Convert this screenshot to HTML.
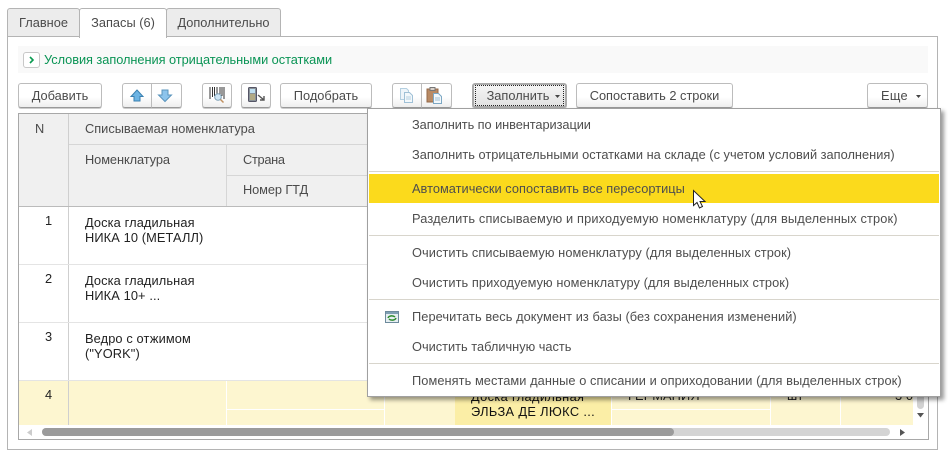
<!DOCTYPE html>
<html><head><meta charset="utf-8"><style>
html,body{margin:0;padding:0;background:#fff}
#p{position:relative;width:948px;height:458px;overflow:hidden;background:#fff;font:12.8px "Liberation Sans",Arial,sans-serif;color:#4b4b4b}
#p div,#p span.a{position:absolute;box-sizing:border-box}
.t{white-space:nowrap;line-height:14px}
.tab{top:8px;height:29px;border:1px solid #b4b4b4;border-bottom:1px solid #b4b4b4;border-radius:3px 3px 0 0;background:#ececec;text-align:center;line-height:27px;color:#4b4b4b}
.btn{top:83px;height:25px;border:1px solid #bcbcbc;border-bottom:1px solid #999;border-radius:3px;background:linear-gradient(#fff 0,#fff 55%,#eee 100%);text-align:center;line-height:24px;white-space:nowrap;box-shadow:0 1px 0 #ccc}
.h{background:#f0f0f0}
.l{background:#d6d6d6}
.m{left:412px;white-space:nowrap;line-height:14px;color:#4e4e4e}
.s{left:369px;width:570px;height:1px;background:#d8d5cc}
.c{color:#222;letter-spacing:.12px}
</style></head><body><div id="p">

<div style="left:7px;top:36px;width:931px;height:414px;border:1px solid #b4b4b4"></div>
<div class="tab" style="left:7px;width:73px;height:29px">Главное</div>
<div class="tab" style="left:79px;width:88px;height:30px;background:#fff;border-bottom:0;z-index:2">Запасы (6)</div>
<div class="tab" style="left:166px;width:115px">Дополнительно</div>

<div style="left:18px;top:46px;width:910px;height:27px;background:#f9f9f9"></div>
<div style="left:23px;top:52px;width:17px;height:16px;border:1px solid #c8c8c8;border-radius:3px;background:#fff"></div>
<svg style="position:absolute;left:28px;top:56px" width="7" height="8"><path d="M2 1l3 3-3 3" fill="none" stroke="#0a9a50" stroke-width="1.6"/></svg>
<div class="t" style="left:44px;top:53px;color:#0a9455;letter-spacing:-.05px">Условия заполнения отрицательными остатками</div>

<div class="btn" style="left:18px;width:84px">Добавить</div>
<div class="btn" style="left:122px;width:30px;border-radius:3px 0 0 3px"></div>
<div class="btn" style="left:151px;width:31px;border-radius:0 3px 3px 0"></div>
<svg style="position:absolute;left:129px;top:88px" width="46" height="16">
<path d="M8 2L14 8.500H11V13H5V8.500H2Z" fill="#6cb4e4" stroke="#3a80b0"/>
<path d="M33 2H39V7H42.500L36 13.500 29.500 7H33Z" fill="#8cc4ec" stroke="#5a94bc"/></svg>
<div class="btn" style="left:202px;width:30px"></div>
<svg style="position:absolute;left:209px;top:86px" width="18" height="18">
<path d="M1 1v12M3.500 1v10M5.500 1v9M8 1v7M11 1v7M13 1v9M15 1v12" stroke="#333" fill="none"/>
<circle cx="9" cy="11" r="3.300" fill="#cfe6f5" stroke="#7d9fb5"/><path d="M11.500 13.500l3 3" stroke="#c09060" stroke-width="1.500"/></svg>
<div class="btn" style="left:241px;width:30px"></div>
<svg style="position:absolute;left:248px;top:87px" width="18" height="18">
<rect x="0.500" y="0.500" width="8" height="14" rx="1" fill="#8a9298" stroke="#556"/><rect x="2" y="2" width="5" height="4" fill="#bfe0f2"/>
<path d="M2 8h5M2 10h5M2 12h5" stroke="#d8c070"/><path d="M10 8l6 5M16 9v4h-4" fill="none" stroke="#555" stroke-width="1.400"/></svg>
<div class="btn" style="left:280px;width:92px">Подобрать</div>
<div class="btn" style="left:392px;width:30px;border-radius:3px 0 0 3px"></div>
<div class="btn" style="left:421px;width:31px;border-radius:0 3px 3px 0"></div>
<svg style="position:absolute;left:399px;top:87px" width="48" height="18">
<path d="M1.500 1.500h6l2 2v9h-8z" fill="#eef5fa" stroke="#b4cfe0"/><path d="M5.500 5.500h5l3 3v7h-8z" fill="#f3f8fb" stroke="#9fc0d6"/><path d="M7 10h5M7 12h5" stroke="#b4cfe0"/>
<rect x="28" y="2" width="11" height="13" fill="#b98a64" stroke="#94694a"/><rect x="31" y="0.500" width="5" height="3" fill="#d8d0c8" stroke="#777"/>
<path d="M34.500 6.500h5l3 3v7h-8z" fill="#f3f8fb" stroke="#7da8c4"/><path d="M36 11h5M36 13h5" stroke="#9fc0d6"/></svg>
<div class="btn" style="left:472px;width:95px;border:2px solid #aaa;line-height:22px;background:linear-gradient(#f5f5f5,#e2e2e2);padding-right:3px">Заполнить</div>
<div style="left:475px;top:85px;width:89px;height:21px;border:1px dotted #222"></div>
<svg style="position:absolute;left:555px;top:95px" width="5" height="3"><path d="M0 0h5L2.500 3z" fill="#444"/></svg>
<div class="btn" style="left:576px;width:157px">Сопоставить 2 строки</div>
<div class="btn" style="left:867px;width:61px;padding-right:6px;letter-spacing:.3px">Еще</div>
<svg style="position:absolute;left:916px;top:95px" width="5" height="3"><path d="M0 0h5L2.500 3z" fill="#444"/></svg>

<!-- table -->
<div style="left:18px;top:113px;width:911px;height:327px;border:1px solid #a8a8a8;background:#fff"></div>
<div class="h" style="left:19px;top:114px;width:350px;height:92px"></div>
<div class="l" style="left:68px;top:114px;width:1px;height:311px;background:#cfcfcf"></div>
<div class="l" style="left:69px;top:144px;width:300px;height:1px"></div>
<div class="l" style="left:226px;top:145px;width:1px;height:61px"></div>
<div class="l" style="left:227px;top:175px;width:142px;height:1px"></div>
<div style="left:19px;top:206px;width:350px;height:1px;background:#bbb"></div>
<div class="t" style="left:35px;top:122px">N</div>
<div class="t" style="left:85px;top:122px">Списываемая номенклатура</div>
<div class="t" style="left:85px;top:153px;letter-spacing:-.08px">Номенклатура</div>
<div class="t" style="left:243px;top:153px;letter-spacing:-.3px">Страна</div>
<div class="t" style="left:243px;top:183px;letter-spacing:-.1px">Номер ГТД</div>

<div class="t c" style="left:45px;top:214px">1</div>
<div class="t c" style="left:85px;top:215px;line-height:15px">Доска гладильная<br>НИКА 10 (МЕТАЛЛ)</div>
<div style="left:19px;top:264px;width:350px;height:1px;background:#e4e4e4"></div>
<div class="t c" style="left:45px;top:272px">2</div>
<div class="t c" style="left:85px;top:273px;line-height:15px">Доска гладильная<br>НИКА 10+ ...</div>
<div style="left:19px;top:322px;width:350px;height:1px;background:#e4e4e4"></div>
<div class="t c" style="left:45px;top:330px">3</div>
<div class="t c" style="left:85px;top:331px;line-height:15px">Ведро с отжимом<br>("YORK")</div>
<div style="left:19px;top:380px;width:350px;height:1px;background:#e4e4e4"></div>

<div style="left:19px;top:381px;width:894px;height:44px;background:#fdf6d0"></div>
<div style="left:68px;top:381px;width:1px;height:44px;background:#cfcfcf"></div>
<div style="left:226px;top:381px;width:1px;height:44px;background:#fff"></div>
<div style="left:227px;top:409px;width:158px;height:1px;background:#fff"></div>
<div style="left:384px;top:381px;width:1px;height:44px;background:#fff"></div>
<div style="left:455px;top:381px;width:156px;height:44px;background:#fbeea6"></div>
<div style="left:611px;top:381px;width:1px;height:44px;background:#fff"></div>
<div style="left:612px;top:409px;width:158px;height:1px;background:#fff"></div>
<div style="left:770px;top:381px;width:1px;height:44px;background:#fff"></div>
<div style="left:840px;top:381px;width:1px;height:44px;background:#fff"></div>
<div class="t c" style="left:45px;top:388px">4</div>
<div class="t" style="left:471px;top:389px;line-height:15px;color:#111;letter-spacing:.35px">Доска гладильная<br>ЭЛЬЗА ДЕ ЛЮКС ...</div>
<div class="t c" style="left:628px;top:389px">ГЕРМАНИЯ</div>
<div class="t c" style="left:787px;top:389px">шт</div>
<div class="t c" style="left:895px;top:389px">3 0</div>

<!-- scrollbars -->
<div style="left:917px;top:381px;width:7px;height:28px;background:#d2d2d2;border-radius:0 0 4px 4px"></div>
<svg style="position:absolute;left:917px;top:413px" width="7" height="5"><path d="M0 0h7L3.500 4.500z" fill="#555"/></svg>
<div style="left:42px;top:428px;width:848px;height:8px;background:#d4d4d4;border-radius:4px"></div>
<div style="left:42px;top:428px;width:632px;height:8px;background:#9b9b9b;border-radius:4px"></div>
<svg style="position:absolute;left:27px;top:429px" width="5" height="7"><path d="M5 0v7L0 3.500z" fill="#ccc"/></svg>
<svg style="position:absolute;left:900px;top:429px" width="5" height="7"><path d="M0 0v7l5-3.500z" fill="#555"/></svg>

<!-- menu -->
<div style="left:367px;top:108px;width:574px;height:289px;background:#fff;border:1px solid #a0a0a0;box-shadow:3px 3px 4px rgba(0,0,0,.4);z-index:0"></div>
<div class="m" style="top:118px;letter-spacing:-.07px">Заполнить по инвентаризации</div>
<div class="m" style="top:148px;letter-spacing:.01px">Заполнить отрицательными остатками на складе (с учетом условий заполнения)</div>
<div class="s" style="top:171px"></div>
<div style="left:369px;top:174px;width:570px;height:29px;background:#fbda1c"></div>
<div class="m" style="top:182px;letter-spacing:.02px">Автоматически сопоставить все пересортицы</div>
<div class="m" style="top:212px;letter-spacing:.14px">Разделить списываемую и приходуемую номенклатуру (для выделенных строк)</div>
<div class="s" style="top:235px"></div>
<div class="m" style="top:246px;letter-spacing:.07px">Очистить списываемую номенклатуру (для выделенных строк)</div>
<div class="m" style="top:276px;letter-spacing:.07px">Очистить приходуемую номенклатуру (для выделенных строк)</div>
<div class="s" style="top:299px"></div>
<svg style="position:absolute;left:385px;top:311px" width="14" height="12"><rect x="0.500" y="0.500" width="13" height="11" fill="#e6eef2" stroke="#6d8a9c"/><rect x="1" y="1" width="12" height="2" fill="#7f9fb3"/><path d="M3 7a4 3 0 0 1 7-1M11 7a4 3 0 0 1-7 1" fill="none" stroke="#2d8a2d" stroke-width="1.500"/></svg>
<div class="m" style="top:310px;letter-spacing:.07px">Перечитать весь документ из базы (без сохранения изменений)</div>
<div class="m" style="top:340px">Очистить табличную часть</div>
<div class="s" style="top:363px"></div>
<div class="m" style="top:374px;letter-spacing:.07px">Поменять местами данные о списании и оприходовании (для выделенных строк)</div>
<svg style="position:absolute;left:692px;top:189px" width="16" height="21"><path d="M1.500 1.500V16.500L5 13.500 7.500 19 10.500 17.500 8 12.500H13Z" fill="#fff" stroke="#222"/></svg>
</div></body></html>
